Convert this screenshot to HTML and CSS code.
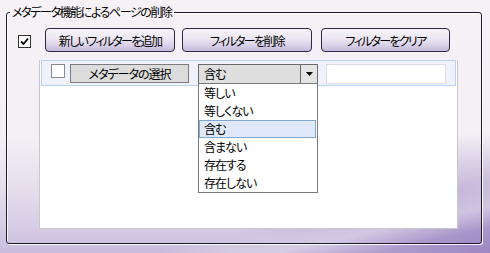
FILE: index.html
```html
<!DOCTYPE html>
<html lang="ja">
<head>
<meta charset="utf-8">
<link rel="stylesheet" href="styles.css">
</head>
<body>
<fieldset class="group">
  <legend class="group-title">メタデータ機能によるページの削除</legend>
  <div class="toolbar">
    <span class="check check-main"><svg width="11" height="11" viewBox="0 0 11 11"><path d="M2 5.5 L4.5 8 L9 2.5" fill="none" stroke="#000" stroke-width="1.8"/></svg></span>
    <button class="btn btn-add">新しいフィルターを追加</button>
    <button class="btn btn-del">フィルターを削除</button>
    <button class="btn btn-clear">フィルターをクリア</button>
  </div>
  <div class="panel">
    <div class="filter-row">
      <span class="check check-row"></span>
      <button class="meta-btn">メタデータの選択</button>
      <div class="combo">
        <span class="combo-value">含む</span>
        <span class="combo-arrow"><svg width="7" height="4" viewBox="0 0 7 4"><path d="M0 0 H7 L3.5 4 Z" fill="#000"/></svg></span>
        <ul class="combo-list">
          <li class="combo-item">等しい</li>
          <li class="combo-item">等しくない</li>
          <li class="combo-item is-selected">含む</li>
          <li class="combo-item">含まない</li>
          <li class="combo-item">存在する</li>
          <li class="combo-item">存在しない</li>
        </ul>
      </div>
      <div class="text-input"></div>
    </div>
  </div>
</fieldset>
</body>
</html>
```

FILE: styles.css
```css
* { box-sizing: border-box; }
html, body { margin: 0; }
body {
  width: 490px;
  height: 253px;
  padding: 4px 8px 9px 6px;
  display: flex;
  overflow: hidden;
  font-family: "Noto Sans CJK JP", sans-serif;
  font-size: 12px;
  font-feature-settings: "palt" 1;
  letter-spacing: -1px;
  color: #000;
  background:
    linear-gradient(168deg, rgba(255,255,255,0) 80%, rgba(255,255,255,0.35) 87%, rgba(255,255,255,0) 93%),
    radial-gradient(ellipse 260px 120px at 100% 100%, rgba(150,125,190,0.85), rgba(150,125,190,0) 100%),
    linear-gradient(180deg, #f5f1f5 0%, #f3eff5 55%, #e6deec 74%, #d6cce6 90%, #c8bcdc 100%);
}
.group {
  flex: 1;
  margin: 0;
  padding: 0;
  min-width: 0;
  border: 1px solid #1e1830;
  border-radius: 3px;
  box-shadow: 1px 1px 0 rgba(255,255,255,0.9), inset 1px 1px 0 rgba(255,255,255,0.9);
}
.group-title {
  margin-left: 3px;
  padding: 0 2px;
  line-height: 16px;
  height: 16px;
  font-size: 12px;
  letter-spacing: -1.4px;
}
.toolbar {
  display: flex;
  align-items: center;
  margin-top: 8px;
  padding-left: 11px;
  height: 24px;
}
.check {
  display: inline-flex;
  align-items: center;
  justify-content: center;
  background: #fff;
}
.check-main {
  width: 13px;
  height: 13px;
  border: 1px solid #333;
  margin-top: 2px;
  margin-right: 14px;
}
.btn {
  height: 24px;
  width: 130px;
  padding: 0;
  border: 1px solid #2e2842;
  border-radius: 4px;
  font: inherit;
  letter-spacing: -1.7px;
  color: #000;
  background: linear-gradient(180deg, #f7f4f9 0%, #ebe6f1 45%, #d8d0e8 75%, #c3b8dc 100%);
}
.btn-del { margin-left: 7px; }
.btn-clear { margin-left: 9px; width: 129px; }
.panel {
  margin: 8px 23px 0 32px;
  height: 169px;
  background: #fff;
  border: 1px solid #c8c8c8;
  border-top: none;
  padding: 0 1px;
}
.filter-row {
  height: 26px;
  border: 1px solid #b9d3f3;
  background: #eff2fc;
  display: flex;
  align-items: flex-start;
  padding: 3px 0 0 9px;
}
.check-row {
  width: 14px;
  height: 14px;
  border: 1px solid #8a8a8a;
  margin-right: 5px;
}
.meta-btn {
  width: 119px;
  height: 19px;
  padding: 0;
  border: 1px solid #7c7c7c;
  background: #dcdcdc;
  font: inherit;
  letter-spacing: inherit;
  line-height: 16px;
  color: #000;
}
.combo {
  position: relative;
  margin-left: 9px;
  width: 120px;
  height: 20px;
  border: 1px solid #6a6a6a;
  background: #dfdfdf;
  display: flex;
}
.combo-value {
  flex: 1;
  padding-left: 5px;
  line-height: 18px;
}
.combo-arrow {
  width: 17px;
  border-left: 1px solid #6a6a6a;
  background: #e4e4e4;
  display: flex;
  align-items: center;
  justify-content: center;
}
.combo-list {
  position: absolute;
  left: -1px;
  top: 18px;
  width: 120px;
  margin: 0;
  padding: 0;
  list-style: none;
  background: #fff;
  border: 1px solid #7a7a7a;
  z-index: 2;
}
.combo-item {
  height: 18px;
  line-height: 18px;
  padding-left: 5px;
}
.combo-item.is-selected {
  margin: 0 1px 0 0;
  padding-left: 4px;
  line-height: 16px;
  border: 1px solid #80a6d6;
  background: #dfe9f9;
}
.text-input {
  margin-left: 8px;
  width: 120px;
  height: 20px;
  background: #fff;
  border: 1px solid #dcdcec;
}
```
